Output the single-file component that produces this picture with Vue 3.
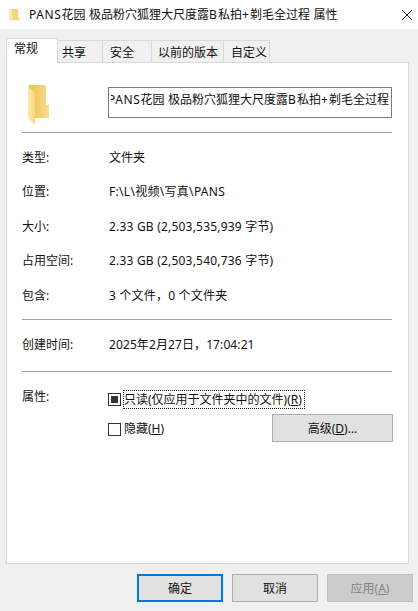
<script setup>
const tabs = [
  { name: '共享', w: 45, pad: 4 },
  { name: '安全', w: 49, pad: 7 },
  { name: '以前的版本', w: 72, pad: 6 },
  { name: '自定义', w: 46, pad: 7 },
]
const nameParts = [
  ['PANS', 'a'], ['花园', ''], [' ', 's'], ['极品粉穴狐狸大尺度露', ''], ['B', 'b'],
  ['私拍', ''], ['+', 'b'], ['剃毛全过程', ''],
]
const infoRows = [
  { k: '类型:', v: '文件夹', ls: 0 },
  { k: '位置:', v: 'F:\\L\\视频\\写真\\PANS', ls: 0.3 },
  { k: '大小:', v: '2.33 GB (2,503,535,939 字节)', ls: 0.2 },
  { k: '占用空间:', v: '2.33 GB (2,503,540,736 字节)', ls: 0.2 },
  { k: '包含:', v: '3 个文件，0 个文件夹', ls: 0.2 },
]
</script>

<template>
  <div class="win">
    <header class="titlebar">
      <svg class="tfolder" viewBox="0 0 10 12" width="10" height="12">
        <path d="M1 0h8v8h1v3H3v1L0 11V0z" fill="#f4d680" />
        <path d="M0 0l3 1v11l-3-1z" fill="#fdeab0" />
      </svg>
      <span class="title"><span v-for="(p, i) in nameParts" :key="i" :class="p[1]">{{ p[0] }}</span><span class="s">{{ ' ' }}</span>属性</span>
      <svg class="close" viewBox="0 0 12 12" width="12" height="12">
        <path d="M1 1l10 10M11 1L1 11" stroke="#222" stroke-width="1" fill="none" />
      </svg>
    </header>

    <main class="body">
      <nav class="tabs">
        <div class="tab active">常规</div>
        <div v-for="t in tabs" :key="t.name" class="tab" :style="{ width: t.w + 'px', paddingLeft: t.pad + 'px' }">{{ t.name }}</div>
      </nav>

      <section class="panel">
        <div class="head">
          <svg class="folder" viewBox="0 0 21 40" width="21" height="40">
            <defs>
              <linearGradient id="fb" x1="0" x2="1" y1="0" y2="0">
                <stop offset="0.3" stop-color="#efc861" />
                <stop offset="1" stop-color="#f9df90" />
              </linearGradient>
              <linearGradient id="ff" x1="0" x2="1" y1="0" y2="0">
                <stop offset="0" stop-color="#fdeaa8" />
                <stop offset="1" stop-color="#f6d97f" />
              </linearGradient>
            </defs>
            <path d="M1 0H18V20H21V33H7V30L1 28Z" fill="url(#fb)" />
            <path d="M0 1L7 8V40L0 33Z" fill="url(#ff)" />
          </svg>
          <div class="namebox">
            <div class="nameclip"><span class="nametext"><span v-for="(p, i) in nameParts" :key="i" :class="p[1]">{{ p[0] }}</span></span></div>
          </div>
        </div>
        <hr class="sep" />

        <div class="group g1">
          <div v-for="r in infoRows" :key="r.k" class="row">
            <span class="label">{{ r.k }}</span><span :style="{ letterSpacing: r.ls + 'px' }">{{ r.v }}</span>
          </div>
        </div>
        <hr class="sep" />

        <div class="group g2">
          <div class="row"><span class="label">创建时间:</span><span class="date">2025年2月27日，17:04:21</span></div>
        </div>
        <hr class="sep" />

        <div class="attrs">
          <span class="attrlabel">属性:</span>
          <div class="attrbody">
            <div class="check first">
              <span class="box"><i class="mark"></i></span>
              <span class="focus">只读(仅应用于文件夹中的文件)(<u>R</u>)</span>
            </div>
            <div class="second">
              <div class="check">
                <span class="box"></span>
                <span class="plain">隐藏(<u>H</u>)</span>
              </div>
              <button class="btn adv">高级(<u>D</u>)...</button>
            </div>
          </div>
        </div>
      </section>

      <footer class="actions">
        <button class="btn ok">确定</button>
        <button class="btn">取消</button>
        <button class="btn off">应用(<u>A</u>)</button>
      </footer>
    </main>
  </div>
</template>

<style>
html, body { margin: 0; padding: 0; background: #f0f0f0; }
</style>

<style scoped>
.win {
  width: 418px;
  height: 611px;
  display: flex;
  flex-direction: column;
  overflow: hidden;
  font: 12px/16px "Noto Sans", "Noto Sans CJK SC", sans-serif;
  color: #111;
  background: #f0f0f0;
}
.a { letter-spacing: 0.6px; }
.s { letter-spacing: 0.3px; white-space: pre; }
.b { letter-spacing: 1.2px; }
.titlebar {
  height: 29px;
  flex: none;
  background: #fff;
  display: flex;
  align-items: center;
  padding: 0 5px 0 9px;
}
.tfolder { flex: none; margin-right: 10px; }
.title { flex: 1; white-space: nowrap; }
.close { flex: none; }
.body {
  flex: 1;
  display: flex;
  flex-direction: column;
  padding: 9px 7px 9px 6px;
}
.tabs {
  display: flex;
  align-items: flex-end;
  height: 25px;
  position: relative;
  z-index: 1;
  margin-bottom: -1px;
}
.tab {
  box-sizing: border-box;
  height: 23px;
  border: 1px solid #d9d9d9;
  border-left: 0;
  padding-top: 4px;
  white-space: nowrap;
}
.tab.active {
  width: 52px;
  height: 25px;
  border-left: 1px solid #d9d9d9;
  border-bottom: 0;
  background: #fff;
  padding: 2px 0 0 7px;
}
.panel {
  box-sizing: border-box;
  width: 403px;
  height: 502px;
  background: #fff;
  border: 1px solid #d9d9d9;
  padding: 0 16px 0 15px;
  flex: none;
}
.head {
  height: 69px;
  box-sizing: border-box;
  padding-top: 22px;
  display: flex;
  align-items: flex-start;
}
.folder { margin-left: 6px; flex: none; }
.namebox {
  box-sizing: border-box;
  width: 287px;
  height: 31px;
  margin: 2px 0 0 59px;
  border: 1px solid #7a7a7a;
  padding: 4px 1px 0 2px;
}
.nameclip { overflow: hidden; white-space: nowrap; }
.nametext { margin-left: -3px; display: inline-block; }
.sep {
  margin: 0;
  border: 0;
  height: 1px;
  background: #a0a0a0;
}
.group { padding-bottom: 7px; padding-top: 6.500px; }
.g2 { padding-bottom: 9.500px; padding-top: 7px; }
.row {
  box-sizing: border-box;
  height: 34.500px;
  padding-top: 2px;
  display: flex;
  align-items: center;
}
.label { width: 87px; flex: none; }
.date { letter-spacing: 0.1px; }
.attrs {
  display: flex;
  padding-top: 17px;
}
.attrlabel { width: 86px; flex: none; }
.attrbody { flex: 1; }
.check { display: flex; align-items: center; }
.first { height: 20px; }
.box {
  box-sizing: border-box;
  width: 13px;
  height: 13px;
  border: 1px solid #333;
  background: #fff;
  margin-right: 2px;
  display: flex;
  align-items: center;
  justify-content: center;
  flex: none;
}
.mark { width: 7px; height: 7px; background: #333; }
.focus {
  outline: 1px dotted #111;
  outline-offset: -1px;
  padding: 2px 3px 1px 1px;
  white-space: nowrap;
}
.plain { margin-left: 1px; white-space: nowrap; }
.second {
  display: flex;
  align-items: flex-start;
  justify-content: space-between;
  margin-top: 5px;
}
.second .check { margin-top: 7px; }
.btn {
  box-sizing: border-box;
  width: 86px;
  height: 28px;
  background: #e1e1e1;
  border: 1px solid #adadad;
  font: inherit;
  color: #111;
  padding: 2px 0 0;
}
.adv { width: 121px; margin-right: -1px; }
.actions {
  display: flex;
  justify-content: flex-end;
  gap: 9px;
  margin-top: 10px;
  margin-right: -2px;
}
.ok { border: 2px solid #0078d7; }
.off { background: #ccc; border-color: #bfbfbf; color: #838383; }
</style>
